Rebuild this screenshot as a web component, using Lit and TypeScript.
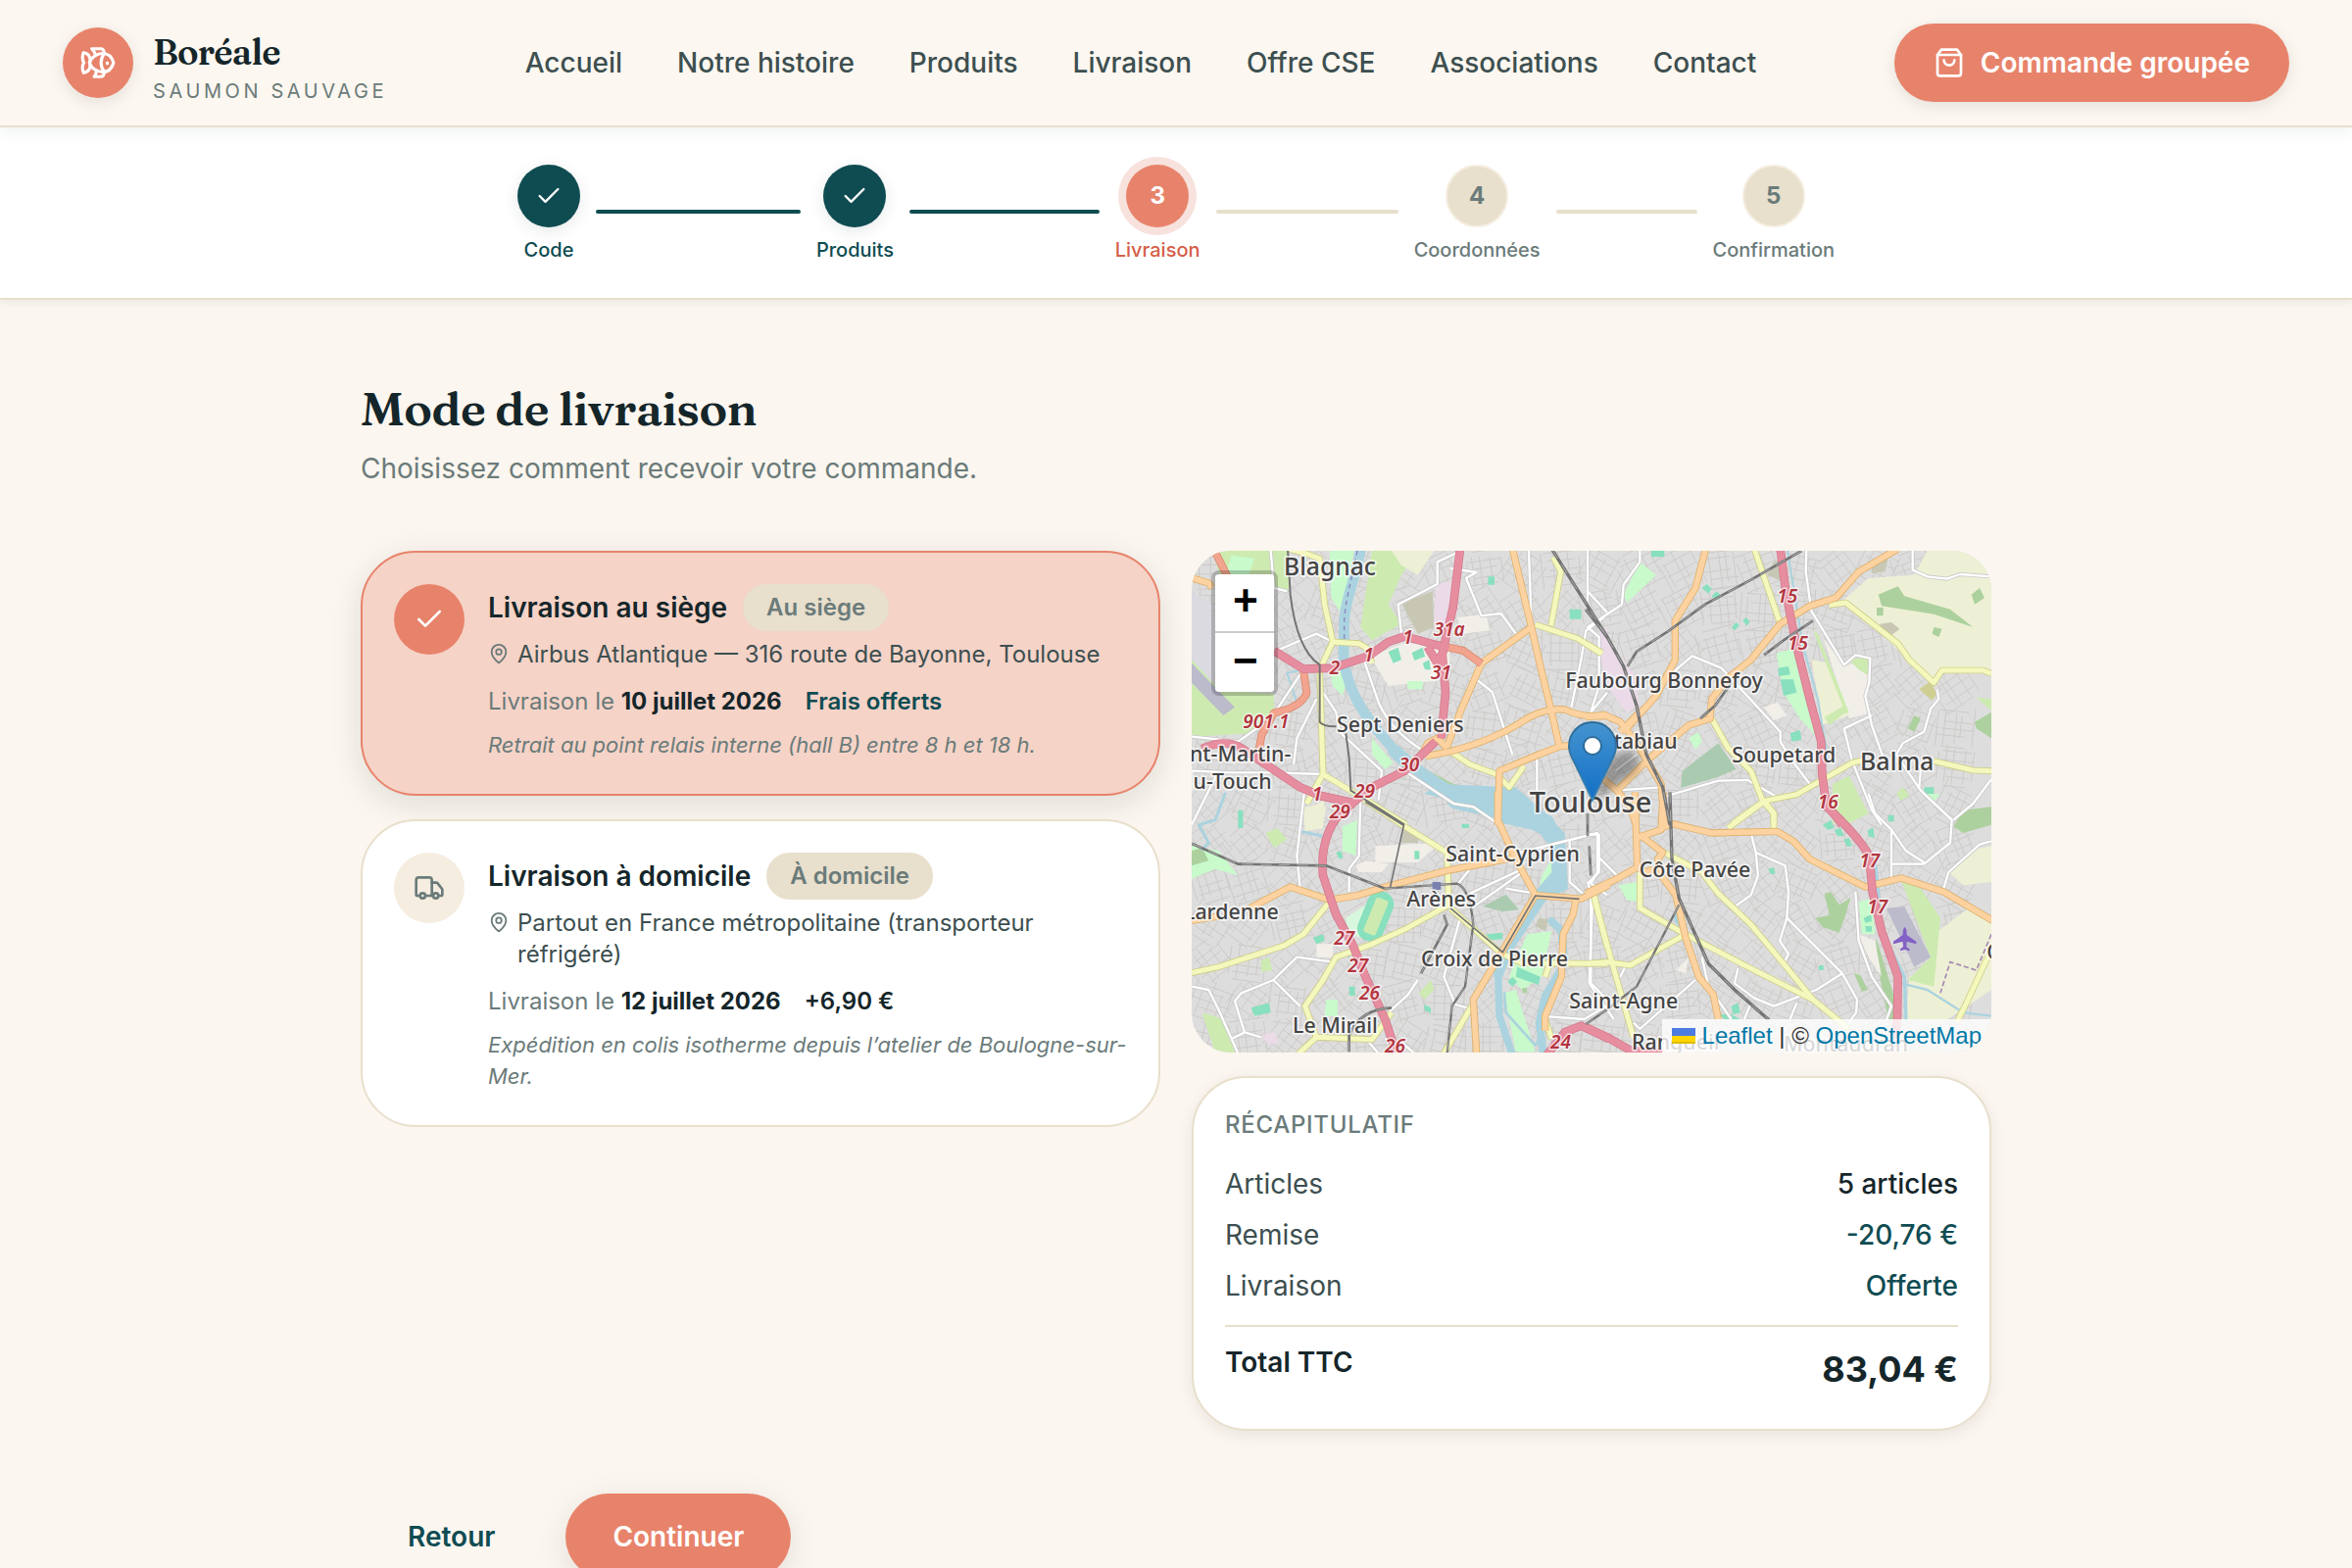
import { LitElement, html, svg, css } from "lit";
import { customElement, property, state } from "lit/decorators.js";
import { classMap } from "lit/directives/class-map.js";

/* ---------- icons ---------- */

const ICONS = {
  fish: svg`<path d="M6.5 12c.94-3.46 4.94-6 8.5-6 3.56 0 6.06 2.54 7 6-.94 3.47-3.44 6-7 6s-7.56-2.53-8.5-6Z"/><path d="M18 12v.5"/><path d="M16 17.93a9.77 9.77 0 0 1 0-11.86"/><path d="M7 10.67C7 8 5.58 5.97 2.73 5.5c-1 1.5-1 5 .23 6.5-1.24 1.5-1.24 5-.23 6.5C5.58 18.03 7 16 7 13.33"/><path d="M10.46 7.26C10.2 5.88 9.17 4.24 8 3h5.8a2 2 0 0 1 1.98 1.67l.23 1.4"/><path d="m16.01 17.93-.23 1.4A2 2 0 0 1 13.8 21H9.5a5.96 5.96 0 0 0 1.49-3.98"/>`,
  bag: svg`<path d="M6 2 3 6v14a2 2 0 0 0 2 2h14a2 2 0 0 0 2-2V6l-3-4Z"/><path d="M3 6h18"/><path d="M16 10a4 4 0 0 1-8 0"/>`,
  check: svg`<path d="M20 6 9 17l-5-5"/>`,
  truck: svg`<path d="M14 18V6a2 2 0 0 0-2-2H4a2 2 0 0 0-2 2v11a1 1 0 0 0 1 1h2"/><path d="M15 18H9"/><path d="M19 18h2a1 1 0 0 0 1-1v-3.65a1 1 0 0 0-.22-.624l-3.48-4.35A1 1 0 0 0 17.52 8H14"/><circle cx="17" cy="18" r="2"/><circle cx="7" cy="18" r="2"/>`,
  pin: svg`<path d="M20 10c0 4.993-5.539 10.193-7.399 11.799a1 1 0 0 1-1.202 0C9.539 20.193 4 14.993 4 10a8 8 0 0 1 16 0"/><circle cx="12" cy="10" r="3"/>`,
};

const icon = (name: keyof typeof ICONS, size: number) => html`<svg
  width=${size} height=${size} viewBox="0 0 24 24" fill="none" stroke="currentColor"
  stroke-width="2" stroke-linecap="round" stroke-linejoin="round" aria-hidden="true"
>${ICONS[name]}</svg>`;

/* ---------- map data: four sheets, each in its own coordinates ---------- */

type Sheet = "nw" | "ne" | "sw" | "se";
const ORIGIN: Record<Sheet, string> = {
  nw: "translate(-48 -66)",
  ne: "translate(1212 -66)",
  sw: "translate(-48 744)",
  se: "translate(1212 744)",
};

const LAND: [Sheet, string, string][] = [
  ["nw", "#cdebb0", "M600 66H740L690 140 650 230 690 290 600 340 565 300Z"],
  ["nw", "#eef0d5", "M660 66H790L740 140 690 110Z"],
  ["nw", "#c8facc", "M470 66H545L520 200 500 250 475 210Z"],
  ["nw", "#cdebb0", "M110 66H345V185H150Z"],
  ["nw", "#c8facc", "M170 80 240 90 220 150 150 150Z"],
  ["nw", "#dadae0", "M48 190 110 230 140 400 110 480 48 430Z"],
  ["nw", "#cdebb0", "M48 400 130 490 300 505V560L230 625 48 635Z"],
  ["nw", "#bbbbcc", "M48 410 180 545 145 570 48 470Z"],
  ["nw", "#c7c7b4", "M690 225 785 190 790 300 740 320Z"],
  ["nw", "#ebdbe8", "M795 170 855 155 845 290 790 300Z"],
  ["nw", "#f2efe9", "M595 390 690 350 840 350 835 460 650 480Z"],
  ["nw", "#f2efe9", "M860 270 950 260 960 310 880 320Z"],
  ["nw", "#88e0be", "M650 375 680 362 690 400 665 410Z M722 378 755 362 762 390 730 402Z M755 410 775 400 780 430 762 430Z M1205 245H1240V275H1205Z"],
  ["nw", "#c8facc", "M708 465H755V490H708Z M470 430 530 440 510 510 480 480Z M600 640 665 715 640 735 600 690Z"],
  ["nw", "#add19e", "M765 735 850 780 980 810 975 830 850 800Z"],
  ["nw", "#c8facc", "M850 795 980 800 975 825 900 820Z"],
  ["nw", "#eef0d5", "M390 850 460 850 450 900H395Z"],
  ["nw", "#ebdbe8", "M1300 330 1320 300V430L1300 400Z"],
  ["nw", "#88e0be", "M955 145H975V170H955Z M1060 830H1085V850H1060Z M190 860H205V885H190Z"],
  ["ne", "#eef0d5", "M1040 66H1236V430H1080L1060 470 980 400 850 270 780 220 860 150 1000 140Z"],
  ["ne", "#add19e", "M890 200 950 175 970 205 1110 245 1180 300 1060 260 900 235Z M885 240H905V265H885Z M1060 300 1085 305 1075 330 1055 320Z M1175 200 1200 180 1215 210 1185 230Z"],
  ["ne", "#c7c7b4", "M895 290 930 285 955 305 930 325 900 310Z M870 100 920 90 910 130 870 135Z"],
  ["ne", "#d0cf93", "M1015 490 1050 465 1068 505 1055 525Z"],
  ["ne", "#f2efe9", "M690 290 785 420 865 395 855 565 800 580 720 330Z"],
  ["ne", "#eef0d5", "M685 400 740 410 800 570 720 600Z"],
  ["ne", "#cdebb0", "M800 400 860 390 862 450 830 430Z M725 575 785 540 790 560 740 600Z M750 780 800 755 860 870 800 900 750 900Z M690 310 705 320 800 560 790 565Z"],
  ["ne", "#c8facc", "M578 380 650 360 690 530 705 640 650 580 600 500Z M310 640 340 620 350 650 330 675Z M110 200 160 100 210 140 120 225Z"],
  ["ne", "#88e0be", "M583 425 615 420 620 445 585 450Z M590 460 630 460 640 500 600 510Z M620 625 650 615 655 645 625 650Z M350 180 365 168 380 182 370 197Z M380 205 395 190 410 205 395 218Z M440 300 455 285 465 295 450 310Z M475 280 485 270 497 285 487 295Z M195 66H235V85H195Z M1030 790H1060V815H1030Z"],
  ["ne", "#ebdbe8", "M35 300 140 440 160 540 120 560 50 470Z"],
  ["ne", "#aacbaf", "M290 740 400 655 455 735 400 758 285 792Z"],
  ["ne", "#add19e", "M1185 590 1236 560V640L1190 610Z M980 610 1000 570 1020 580 1000 620Z"],
  ["ne", "#cdebb0", "M945 810 965 790 985 815 960 830Z M1190 515 1236 520V555Z"],
  ["ne", "#f2efe9", "M540 545 580 530 610 570 570 585Z"],
  ["ne", "#c7c7b4", "M570 100 600 90 595 160 550 140Z"],
  ["sw", "#f2efe9", "M610 160 810 150 740 210 610 210Z M550 220 580 205 650 215 630 240 560 240Z M430 460H480V500H430Z"],
  ["sw", "#c7c7b4", "M700 95 745 120 740 150 690 150Z M1110 380 1140 385 1130 420 1100 405Z"],
  ["sw", "#c8facc", "M510 100 555 80 550 190 510 175Z M1075 430 1150 420 1120 560 1060 600 1020 560Z M1120 250 1150 200 1150 290 1110 300Z M1005 610 1040 600 1100 790 1040 790Z"],
  ["sw", "#eef0d5", "M390 50 455 20 450 105 395 115Z"],
  ["sw", "#cdebb0", "M275 120 310 105 340 140 300 165Z M260 510 285 500 295 540 262 545Z M80 670 145 690 180 792H120Z M745 610 780 570 790 600 760 630Z"],
  ["sw", "#d8f8dd", "M520 380 610 320 560 440 525 420Z"],
  ["sw", "#c8facc", "M460 630H495V680H455Z M48 160 130 175 190 250 120 230 48 260Z M1085 70 1130 90 1120 110 1070 90Z"],
  ["sw", "#add19e", "M48 175 80 165 100 205 48 220Z M1060 595H1075V610H1060Z"],
  ["sw", "#aacbaf", "M940 345 1010 308 1050 355 1000 360Z"],
  ["sw", "#ebdbe8", "M260 740 300 728 315 760 285 770Z"],
  ["sw", "#88e0be", "M230 655 285 640 290 670 240 680Z M420 440 450 430 455 450 430 460Z M530 590H548V618H530Z M490 180 505 175 512 195 500 200Z M760 645 780 655 780 672 760 662Z M730 175H745V200H730Z M1045 530 1115 560 1110 585 1040 560Z M1015 575 1030 560 1045 575 1030 590Z M190 75H205V105H190Z M875 92H897V105H875Z M950 430 1000 425 1000 445 960 448Z"],
  ["se", "#add19e", "M697 380 740 372 725 305 745 300 770 340 805 318 790 370 770 425 720 408Z M883 440 960 690H920L885 510Z M1120 100 1150 50 1236 40V95L1150 120Z M815 550 835 555 858 600 840 605Z"],
  ["se", "#eef0d5", "M1060 430 1180 340 1236 390V600L1100 692H975L985 560 1060 540Z M1105 240 1180 170 1236 160V270L1150 280Z"],
  ["se", "#cdebb0", "M960 265 1020 290 1080 380 1060 590 980 570 1050 500Z"],
  ["se", "#c8facc", "M95 280 150 270 150 330 120 325Z M830 330 870 320 880 430 840 430Z M1040 0H1080L1060 25Z"],
  ["se", "#bbbbcc", "M915 350 970 345 1050 500 1000 530Z"],
  ["se", "#f2efe9", "M270 540 310 500 300 550Z M830 430 880 450 900 560 860 500Z"],
  ["se", "#88e0be", "M720 95 745 80 755 105 735 110Z M755 110 775 105 785 130 765 130Z M785 140 800 135 810 160 795 162Z M857 110 875 105 878 135 860 130Z M553 230 570 225 575 245 560 245Z M845 380 868 370 870 390 850 395Z M850 405H870V422H852Z M440 650 460 640 468 670 445 675Z M405 675H440L470 692H420Z M920 65H938V85H920Z M708 525H722V540H708Z"],
];

const WATER: [Sheet, string, number][] = [
  ["nw", "M565 60C558 130 520 200 515 280L513 400C530 520 600 600 680 690", 32],
  ["nw", "M670 680C740 745 800 790 880 825", 42],
  ["nw", "M860 825C950 850 1040 850 1130 905", 64],
  ["nw", "M280 620 260 600 370 530 340 440 390 430", 6],
  ["sw", "M1150 390 1180 420 1190 520 1130 620 1112 700 1125 800", 24],
  ["sw", "M985 520 990 680 1030 800", 22],
  ["sw", "M1005 610 1010 670 1100 770 1130 720", 8],
  ["sw", "M150 0 120 80 70 95 100 150 80 170", 9],
  ["sw", "M380 115 450 130", 9],
  ["ne", "M612 66 660 360 705 520 735 700", 6],
  ["se", "M880 200 900 420 970 560 975 692", 10],
  ["se", "M960 580 1040 600 1150 670 1236 680", 7],
  ["se", "M268 375 285 400", 18],
];

type RoadKind = "minor" | "yellow" | "orange" | "trunk" | "motorway";
const ROADS: Record<RoadKind, [Sheet, string][]> = {
  minor: [
    ["nw", "M860 72 800 100V168L680 230 690 320 575 400 620 530Q660 620 760 680"],
    ["nw", "M840 120 920 132 888 150 935 265 995 258 1040 320"],
    ["nw", "M300 375 430 320 480 345M290 66 300 180 340 190"],
    ["nw", "M920 460 968 498 1030 690M390 430 290 580 190 650 48 635"],
    ["nw", "M430 520 370 640 360 720M48 740 170 745 290 745 450 750"],
    ["nw", "M450 500 490 560 500 620 630 740 620 830"],
    ["nw", "M700 740 850 840 910 850 990 905M1260 66V190L1320 255"],
    ["nw", "M1310 270 1255 310 1240 400 1210 545M1080 66 1088 290M130 740 48 905"],
    ["nw", "M1105 700V800M1270 560 1320 500"],
    ["sw", "M392 0 370 190 380 290M565 0 560 190 530 230V300"],
    ["sw", "M905 350 1060 240M900 305 1050 235M860 280 900 230M1050 180 1290 120V240L1270 275 1320 310"],
    ["sw", "M1205 140V270L1245 305M1010 290 1100 305M380 650 298 570 370 500 480 515"],
    ["sw", "M298 570 200 610 180 635 210 730 170 750M210 730 260 745M48 590 100 600 130 660 190 795"],
    ["sw", "M740 570 710 615 650 670M870 380 820 560 855 645 890 655"],
    ["sw", "M1270 320V580L1320 630M1140 682 1250 690 1300 660M640 750 690 760 730 795M590 760 620 795"],
    ["ne", "M160 66V100L110 170 105 230 0 300 35 330V480L10 560"],
    ["ne", "M265 435 320 388 410 425 590 620V650L620 700 680 780"],
    ["ne", "M670 66 668 130 685 250 785 415 820 385 865 395 862 470 850 510 870 600 905 700"],
    ["ne", "M995 66V125L1040 145 1100 152 1140 138 1236 145"],
    ["ne", "M1070 490 1075 520 1050 550 1030 620 965 655 945 690 1020 800 1115 890"],
    ["ne", "M870 570 785 610 810 710 870 860 900 905M230 820 400 770 490 768 580 820"],
    ["ne", "M1022 710 1015 790M1236 765 1180 840 1120 890M80 800 225 790M85 740 150 690M0 185V220"],
    ["se", "M500 120 515 180 605 220 615 300 610 380 690 460 780 550 825 630 822 670 800 700"],
    ["se", "M515 180 522 250 500 310 455 342M610 380 588 450 615 490 600 520"],
    ["se", "M780 550 700 600 570 650 510 625 450 580 460 535M640 640 620 690"],
    ["se", "M860 0 880 60 930 110V260M1030 0 1115 80 1110 150 1030 215 930 215M930 110 975 175 1030 210"],
    ["se", "M820 300 830 450 870 560 930 650 915 692M1236 145 1200 155 1105 240 1090 290"],
    ["se", "M350 500 370 590 440 690M0 270 15 320 5 580 80 690M330 570 160 720 140 700"],
    ["se", "M0 125H35V240L0 275M35 195 90 250M100 560 120 520M480 690 500 640"],
  ],
  yellow: [
    ["nw", "M345 60 400 75 440 90 455 230 480 345 440 430 450 750 400 840"],
    ["nw", "M480 345 560 350 585 365 600 410M450 750 600 840 705 905"],
    ["nw", "M840 680 900 720 980 750 1020 790 1065 725"],
    ["nw", "M1100 292 1230 335 1300 380M1148 295 1178 130 1155 85"],
    ["sw", "M580 20 700 100 830 180 835 340 700 415 600 460 490 500 450 570 395 650 430 745"],
    ["sw", "M375 795 430 745 600 752 660 670M470 330 390 430 330 465 130 530 48 548"],
    ["sw", "M840 350 995 488 1060 518 1320 520M905 650 820 795M1280 310 1320 470M1130 560 1150 500"],
    ["sw", "M400 0 430 -20M1130 690 1150 750"],
    ["ne", "M510 60 590 290M740 232 790 225 950 350 985 400 1060 470 1085 432 1210 432 1236 442"],
    ["ne", "M380 580 430 670 500 740 535 830 570 870V905M445 900 540 832 640 812 810 715 840 708"],
    ["ne", "M1060 710 1180 738 1236 740M0 352 45 380"],
    ["se", "M540 20 570 60V110M545 20 430 105M235 180 350 240 400 305 500 400 600 520 690 630 800 720"],
    ["se", "M160 240 160 350 290 425 500 535 690 630M300 430 130 525 60 515 0 520"],
    ["se", "M20 320 70 500 140 745M1225 500 1160 640 1130 700"],
  ],
  orange: [
    ["nw", "M1030 60 1088 300 1120 440 1145 540 1175 670"],
    ["nw", "M1088 300 935 410 870 560 830 665"],
    ["nw", "M765 695 840 680Q960 650 1050 595 1120 545 1190 552 1250 580 1320 570"],
    ["nw", "M1230 660 1175 665 1110 690 990 740 985 905M750 695 770 655 800 640 830 670"],
    ["nw", "M50 150 100 165 110 180"],
    ["sw", "M985 -5V80L1040 200 1100 310 1240 322 1325 280"],
    ["sw", "M225 350 350 285 470 325 560 310 640 285 830 235 1040 195M48 388 130 375"],
    ["sw", "M1100 310 1000 480 910 630 920 795M1225 320 1215 370 1185 430 1180 560 1130 680V725"],
    ["ne", "M362 60 330 180 268 280 268 400 210 510 110 620"],
    ["ne", "M950 60 830 130 760 210 680 235 590 290 540 350 500 400 430 455 380 520 375 580 310 600 180 710 90 800 50 765"],
    ["ne", "M-5 575 50 568 100 590 140 640 225 780 235 905M90 800 130 850 148 905M100 620 160 560"],
    ["se", "M145 -5 152 225 90 260 -5 305M232 -5 225 110 150 135"],
    ["se", "M225 105 260 92 380 120 580 115 630 145 680 200 850 285 960 258 1090 300 1240 388"],
    ["se", "M160 125 230 180 215 200 225 250 270 310 300 440 340 560 385 615 400 690"],
    ["se", "M152 225 180 240 200 230"],
  ],
  trunk: [
    ["nw", "M120 70 160 150M835 362 880 372 935 412"],
    ["nw", "M390 430 400 500Q385 545 300 562L262 630 250 700"],
  ],
  motorway: [
    ["nw", "M300 372 390 428 480 425 590 388 650 345 700 328 800 355 835 362"],
    ["nw", "M870 60 848 240 815 380 825 500 812 640M770 360 800 410 820 370"],
    ["nw", "M80 672Q150 640 200 670L290 730 380 790 440 815 540 838 600 790 700 740 795 650"],
    ["sw", "M440 5 550 30M560 10 490 75Q440 150 450 250L490 370 540 460 580 560 640 690 675 795"],
    ["ne", "M590 60 608 200 640 360 680 520 715 650 718 750 730 840 780 905"],
    ["se", "M722 30Q830 130 862 190L872 300 900 420 950 560 948 690 935 795"],
    ["sw", "M1135 800 1190 730 1240 710 1325 750"],
    ["se", "M-5 715 60 745 130 785 230 795"],
  ],
};

const ROAD_STYLE: Record<RoadKind, [string, string, number]> = {
  minor: ["#c9c9c9", "#ffffff", 9],
  yellow: ["#cdce8a", "#f5f8bd", 17],
  orange: ["#dfb06c", "#fcd3a0", 19],
  trunk: ["#d98a72", "#f3a48e", 21],
  motorway: ["#d67a8e", "#e68ea0", 23],
};

const RAILS: [Sheet, string, number][] = [
  ["nw", "M1150 60 1200 140 1320 330", 10],
  ["ne", "M-5 245 60 330 110 420 150 540 180 690 230 790 252 905", 10],
  ["ne", "M655 66 500 155 360 230 250 310 150 375 122 420", 8],
  ["ne", "M690 280 600 340 540 385M440 470 390 540 345 580", 8],
  ["se", "M252 -5 258 200 280 320 370 520 450 600 555 692", 10],
  ["se", "M280 340 150 590 60 660 -5 705", 7],
  ["sw", "M48 152 190 215 460 220 640 290", 8],
  ["sw", "M640 290 860 275Q900 290 910 400L885 590 845 650 830 795", 7],
  ["sw", "M580 25 697 97 655 290M840 350 1000 485 1100 312 1235 322", 5],
  ["sw", "M530 790V740Q560 660 660 655M820 370 830 400 750 550M1260 60V130M1265 160 1270 250", 8],
  ["nw", "M342 60 350 200Q370 370 440 415V590Q450 605 490 604", 6],
  ["nw", "M520 625 530 700 535 800 700 905", 6],
];

const PLACES: [Sheet, string, number, number, number, string?][] = [
  ["nw", "Blagnac", 330, 140, 74],
  ["nw", "Sept Deniers", 492, 622, 64],
  ["nw", "Faubourg Bonnefoy", 1192, 486, 64],
  ["ne", "Matabiau", 275, 672, 64, "end"],
  ["nw", "Toulouse", 1082, 866, 87],
  ["ne", "Soupetard", 442, 714, 64],
  ["ne", "Balma", 834, 738, 75],
  ["nw", "Saint-Martin-", 352, 712, 64, "end"],
  ["nw", "du-Touch", 293, 796, 64, "end"],
  ["sw", "Saint-Cyprien", 826, 208, 64],
  ["sw", "Arènes", 706, 346, 64],
  ["sw", "Lardenne", 314, 384, 64, "end"],
  ["sw", "Croix de Pierre", 750, 528, 64],
  ["sw", "Le Mirail", 357, 732, 64],
  ["sw", "Saint-Agne", 1204, 656, 64],
  ["se", "Côte Pavée", 158, 256, 64],
  ["se", "Rangueil", 135, 784, 64],
  ["se", "Montaudran", 600, 790, 64],
  ["se", "Quint", 1222, 507, 64],
];

const REFS: [Sheet, string, number, number][] = [
  ["nw", "31a", 788, 328], ["nw", "1", 694, 352], ["nw", "1", 574, 406], ["nw", "2", 470, 444],
  ["nw", "31", 780, 460], ["nw", "901.1", 205, 610], ["nw", "30", 682, 742], ["nw", "29", 546, 822],
  ["nw", "29", 470, 886], ["nw", "1", 416, 830], ["sw", "27", 484, 462], ["sw", "27", 526, 545],
  ["sw", "26", 561, 630], ["sw", "26", 639, 792], ["ne", "15", 580, 226], ["ne", "15", 612, 368],
  ["ne", "16", 704, 856], ["se", "17", 832, 226], ["se", "17", 856, 365], ["sw", "24", 1146, 780],
];

/** Fine residential street mesh: small patches of jittered parallel lines. */
function streetMesh(): string {
  let seed = 7;
  const rnd = () => ((seed = (seed * 16807) % 2147483647) / 2147483647);
  let d = "";
  for (let cy = 60; cy < 1536; cy += 120) {
    for (let cx = 60; cx < 2448; cx += 120) {
      const a = rnd() * 1.5;
      for (const ang of [a, a + 1.57]) {
        const ux = Math.cos(ang), uy = Math.sin(ang);
        for (let k = -2; k <= 2; k++) {
          const off = k * 27 + rnd() * 14;
          const l1 = 30 + rnd() * 35, l2 = 30 + rnd() * 35;
          const x = cx - uy * off, y = cy + ux * off;
          d += `M${Math.round(x - ux * l1)} ${Math.round(y - uy * l1)}L${Math.round(x + ux * l2)} ${Math.round(y + uy * l2)}`;
        }
      }
    }
  }
  return d;
}
const MESH = streetMesh();

@customElement("city-map")
export class CityMap extends LitElement {
  static styles = css`
    :host { display: block; }
    .map {
      position: relative;
      overflow: hidden;
      aspect-ratio: 51 / 32;
      border-radius: 40px;
      background: #dddddd;
      font-family: "Liberation Sans", Arial, sans-serif;
    }
    .tiles { display: block; width: 100%; height: 100%; }
    .place { font-family: "Noto Sans", sans-serif; font-weight: 500; fill: #444; stroke: rgba(255, 255, 255, 0.7); stroke-width: 11px; paint-order: stroke; stroke-linejoin: round; }
    .ref { font: italic 600 57px "Noto Sans", sans-serif; fill: #b2353f; stroke: rgba(255, 255, 255, 0.7); stroke-width: 9px; paint-order: stroke; stroke-linejoin: round; }
    .marker { position: absolute; left: 50%; top: 50%; width: 132px; height: 84px; margin: -82px 0 0 -24px; }
    .zoom {
      position: absolute;
      left: 20px;
      top: 20px;
      display: flex;
      flex-direction: column;
      border: 4px solid rgba(0, 0, 0, 0.2);
      border-radius: 8px;
      background-clip: padding-box;
    }
    .zoom button {
      box-sizing: border-box;
      width: 60px;
      height: 60px;
      border: 0;
      padding: 2px 0 0 2px;
      background: #fff;
      color: #000;
      font: bold 44px/56px "Liberation Mono", monospace;
    }
    .zoom button:first-child { border-bottom: 2px solid #ccc; border-radius: 4px 4px 0 0; }
    .zoom button:last-child { border-radius: 0 0 4px 4px; }
    .credit {
      position: absolute;
      right: 0;
      bottom: 0;
      padding: 0 10px;
      background: rgba(255, 255, 255, 0.8);
      color: #333;
      font-size: 24px;
      line-height: 34px;
    }
    .credit a { color: #0078a8; text-decoration: none; }
    .flag { display: inline; }
  `;

  private roads(kind: RoadKind) {
    const [casing, fill, width] = ROAD_STYLE[kind];
    const layer = (color: string, w: number) => svg`<g fill="none" stroke=${color} stroke-width=${w} stroke-linejoin="round">
      ${ROADS[kind].map(([s, d]) => svg`<path transform=${ORIGIN[s]} d=${d}/>`)}</g>`;
    return svg`${layer(casing, width + 3)}${layer(fill, width - 2)}`;
  }

  render() {
    return html`
      <div class="map" role="region" aria-label="Carte de Toulouse">
        <svg class="tiles" viewBox="0 0 2448 1536" preserveAspectRatio="xMidYMid slice" aria-hidden="true">
          <path d=${MESH} fill="none" stroke="#cdcbc8" stroke-width="3"/>
          ${LAND.map(([s, c, d]) => svg`<path transform=${ORIGIN[s]} fill=${c} d=${d}/>`)}
          <g transform=${ORIGIN.sw}>
            <rect x="570" y="295" width="82" height="160" rx="40" transform="rotate(22 611 375)" fill="#88e0be"/>
            <rect x="592" y="318" width="40" height="114" rx="8" transform="rotate(22 611 375)" fill="#cdebb0"/>
          </g>
          <g fill="none" stroke="#aad3df" stroke-linejoin="round" stroke-linecap="round">
            ${WATER.map(([s, d, w]) => svg`<path transform=${ORIGIN[s]} stroke-width=${w} d=${d}/>`)}
          </g>
          <path transform=${ORIGIN.sw} fill="#aad3df" d="M760 0 800 -30 1040 -20 1120 50 1190 120 1200 290 1130 330 1030 480 1000 560 970 560 990 480 1090 310 1150 240V170L1110 115 1000 90 930 50 850 20Z"/>
          <path transform=${ORIGIN.nw} fill="none" stroke="#8a86c0" stroke-width="4" stroke-dasharray="14 12" d="M555 66C545 130 520 200 515 280V340"/>
          ${this.roads("minor")}${this.roads("yellow")}${this.roads("orange")}${this.roads("trunk")}${this.roads("motorway")}
          <g fill="none" stroke="#747474">
            ${RAILS.map(([s, d, w]) => svg`<path transform=${ORIGIN[s]} stroke-width=${w} d=${d}/>`)}
          </g>
          <g fill="none" stroke="#c4c4c4" stroke-dasharray="34 22">
            ${RAILS.filter((r) => r[2] > 6).map(([s, d]) => svg`<path transform=${ORIGIN[s]} stroke-width="2" d=${d}/>`)}
          </g>
          <path transform=${ORIGIN.se} fill="none" stroke="#a58ab0" stroke-width="5" stroke-dasharray="16 8" d="M1236 430 1190 540 1110 515 1080 610"/>
          <rect transform=${ORIGIN.sw} x="785" y="270" width="26" height="24" fill="#7981b0"/>
          <path transform=${ORIGIN.se} fill="#8461c4" d="M971 408Q978 414 977 432L1006 452V460L977 452 976 468 986 476V481L971 477 957 481V476L966 468 965 452 936 460V452L965 432Q964 414 971 408Z"/>
          ${PLACES.map(([s, t, x, y, size, anchor]) => svg`<text class="place" transform=${ORIGIN[s]} x=${x} y=${y} font-size=${size} text-anchor=${anchor ?? "start"}>${t}</text>`)}
          ${REFS.map(([s, t, x, y]) => svg`<text class="ref" transform=${ORIGIN[s]} x=${x} y=${y}>${t}</text>`)}
        </svg>
        <svg class="marker" viewBox="0 0 132 84" aria-hidden="true">
          <defs>
            <linearGradient id="pin" x1="0" y1="0" x2="0" y2="1"><stop offset="0" stop-color="#4594cf"/><stop offset="1" stop-color="#126fc6"/></linearGradient>
            <linearGradient id="rim" x1="0" y1="0" x2="0" y2="1"><stop offset="0" stop-color="#2e6c97"/><stop offset="1" stop-color="#3883b7"/></linearGradient>
            <filter id="soft" x="-30%" y="-30%" width="160%" height="160%"><feGaussianBlur stdDeviation="4"/></filter>
          </defs>
          <path d="M26 82 38 44Q52 26 68 32 78 40 66 54Z" fill="#000" opacity=".32" filter="url(#soft)"/>
          <path d="M25 1C11 1 1 12 1 25.500c0 6 2.500 11 5.500 16.500L25 80.500 43.500 42C46.500 36.500 49 31.500 49 25.500 49 12 39 1 25 1Z" fill="url(#pin)" stroke="url(#rim)" stroke-width="2"/>
          <circle cx="25" cy="25" r="9" fill="#fff" stroke="#2e6c97" stroke-width="2"/>
        </svg>
        <div class="zoom">
          <button type="button" aria-label="Zoom avant">+</button>
          <button type="button" aria-label="Zoom arrière">−</button>
        </div>
        <div class="credit">
          <a href="#leaflet"><svg class="flag" width="24" height="16" viewBox="0 0 12 8" aria-hidden="true"><path fill="#4C7BE1" d="M0 0h12v4H0z"/><path fill="#FFD500" d="M0 4h12v3H0z"/><path fill="#E0BC00" d="M0 7h12v1H0z"/></svg> Leaflet</a> | © <a href="#osm">OpenStreetMap</a>
        </div>
      </div>
    `;
  }
}

/* ---------- order steps ---------- */

@customElement("order-steps")
export class OrderSteps extends LitElement {
  @property({ type: Array }) steps: string[] = [];
  @property({ type: Number }) current = 0;

  static styles = css`
    :host { display: block; background: #fff; border-bottom: 2px solid #e8dfcc; box-shadow: 0 2px 8px rgba(15, 76, 82, 0.08); padding: 38px 64px 40px; }
    .steps { display: flex; max-width: 1344px; margin: 0 auto; padding: 0; list-style: none; }
    .item { display: flex; align-items: center; flex: 1; }
    .item:last-child { flex: none; }
    .step { display: flex; flex-direction: column; align-items: center; gap: 14px; }
    .dot {
      display: flex; align-items: center; justify-content: center;
      box-sizing: border-box; width: 64px; height: 64px; border-radius: 50%;
      border: 2px solid #f5ede0; background: #e8dfcc; color: #6b7b7a;
      font-size: 24px; font-weight: 700;
    }
    .label { font-size: 20px; line-height: 18px; font-weight: 500; color: #6b7b7a; }
    .line { flex: 1; height: 4px; margin: 0 16px; border-radius: 2px; background: #e8dfcc; }
    .done .dot { border: 0; background: #0f4c52; color: #fff; box-shadow: 0 4px 16px rgba(15, 38, 42, 0.1); }
    .done .label { color: #0f4c52; }
    .done .line { background: #0f4c52; }
    .active .dot { border: 0; background: #e8836b; color: #fff; box-shadow: 0 0 0 8px #f7e2dd; }
    .active .label { color: #d5604a; }
  `;

  render() {
    return html`<ol class="steps">
      ${this.steps.map((name, i) => html`
        <li class=${classMap({ item: true, done: i < this.current, active: i === this.current })}>
          <div class="step">
            <span class="dot">${i < this.current ? icon("check", 28) : i + 1}</span>
            <span class="label">${name}</span>
          </div>
          ${i < this.steps.length - 1 ? html`<span class="line"></span>` : null}
        </li>`)}
    </ol>`;
  }
}

/* ---------- page ---------- */

const NAV = ["Accueil", "Notre histoire", "Produits", "Livraison", "Offre CSE", "Associations", "Contact"];

const OPTIONS = [
  {
    id: "siege", title: "Livraison au siège", tag: "Au siège",
    place: "Airbus Atlantique — 316 route de Bayonne, Toulouse",
    date: "10 juillet 2026", fee: "Frais offerts", free: true,
    note: "Retrait au point relais interne (hall B) entre 8 h et 18 h.",
  },
  {
    id: "domicile", title: "Livraison à domicile", tag: "À domicile",
    place: "Partout en France métropolitaine (transporteur réfrigéré)",
    date: "12 juillet 2026", fee: "+6,90 €", free: false,
    note: "Expédition en colis isotherme depuis l’atelier de Boulogne-sur-Mer.",
  },
];

@customElement("app-root")
export class AppRoot extends LitElement {
  @state() private selected = "siege";

  static styles = css`
    :host { display: block; min-height: 100vh; background: #fbf6ef; color: #15262a; font-family: Inter, sans-serif; font-size: 28px; line-height: 40px; }
    a { color: inherit; text-decoration: none; }
    button { font: inherit; cursor: pointer; border: 0; }
    .header {
      position: relative; z-index: 1;
      display: flex; align-items: center; justify-content: space-between;
      box-sizing: border-box; height: 130px; padding: 0 64px;
      background: #fcf7f0; border-bottom: 2px solid #e8dfcc;
      box-shadow: 0 4px 16px rgba(15, 76, 82, 0.08);
    }
    .brand { display: flex; align-items: center; gap: 20px; }
    .logo { display: flex; align-items: center; justify-content: center; width: 72px; height: 72px; border-radius: 50%; background: #e8836b; color: #fff; box-shadow: 0 4px 16px rgba(15, 38, 42, 0.1); }
    .names { display: flex; flex-direction: column; padding-top: 6px; }
    .name { font: 600 36px/52px Fraunces, "Liberation Serif", serif; letter-spacing: -0.02em; }
    .tagline { font-size: 20px; line-height: 28px; letter-spacing: 0.18em; color: #6b7b7a; }
    .nav { display: flex; gap: 56px; font-weight: 500; color: #3d4f50; }
    .cta { display: flex; align-items: center; gap: 16px; padding: 20px 40px; border-radius: 40px; background: #e8836b; color: #fff; font-weight: 600; box-shadow: 0 4px 16px rgba(15, 38, 42, 0.1); }
    .main { max-width: 1664px; margin: 0 auto; padding: 80px 64px; }
    .heading { margin: 0; font: 600 48px/62px Fraunces, "Liberation Serif", serif; letter-spacing: -0.01em; }
    .intro { margin: 8px 0 62px; line-height: 44px; color: #6b7b7a; }
    .columns { display: grid; grid-template-columns: 1fr 1fr; gap: 32px; align-items: start; }
    .stack { display: flex; flex-direction: column; gap: 24px; margin: 0; padding: 0; border: 0; min-width: 0; }
    .option {
      position: relative; display: flex; gap: 24px; padding: 32px; cursor: pointer;
      border: 2px solid #e8dfcc; border-radius: 56px; background: #fff;
      font-size: 24px; line-height: 32px;
    }
    .option.on { border-color: #e8836b; background: #f5d3c7; box-shadow: 0 8px 32px rgba(15, 38, 42, 0.12); }
    .radio { position: absolute; opacity: 0; margin: 0; }
    .badge { display: flex; flex: none; align-items: center; justify-content: center; width: 72px; height: 72px; border-radius: 50%; background: #f5ede0; color: #6b7b7a; }
    .on .badge { background: #e8836b; color: #fff; }
    .body { flex: 1; min-width: 0; padding-bottom: 2px; }
    .top { display: flex; align-items: center; gap: 16px; margin-bottom: 8px; }
    .title { font-size: 28px; font-weight: 600; }
    .tag { padding: 8px 24px; border-radius: 24px; background: #e8dfcc; color: #6b7b7a; font-weight: 600; }
    .place { display: flex; gap: 8px; color: #3d4f50; margin-bottom: 16px; }
    .pin { flex: none; height: 22px; padding-top: 4px; color: #6b7b7a; line-height: 0; }
    .when { display: flex; gap: 24px; margin-bottom: 12px; color: #6b7b7a; }
    .when strong { color: #15262a; font-weight: 700; }
    .when .free { color: #0f4c52; }
    .when .fee { font-weight: 600; }
    .note { font-size: 22px; font-style: italic; color: #6b7b7a; }
    .summary { padding: 32px 32px 34px; border: 2px solid #e8dfcc; border-radius: 56px; background: #fff; box-shadow: 0 4px 16px rgba(15, 38, 42, 0.08); }
    .caption { margin: 0 0 24px; font-size: 24px; line-height: 32px; font-weight: 500; letter-spacing: 0.03em; color: #6b7b7a; }
    .rows { display: flex; flex-direction: column; gap: 12px; margin: 0; }
    .row { display: flex; justify-content: space-between; color: #3d4f50; }
    .row dd { margin: 0; font-weight: 500; color: #15262a; }
    .row dd.good { color: #0f4c52; }
    .row.total { margin-top: 8px; padding-top: 16px; border-top: 2px solid #e8dfcc; color: #15262a; font-weight: 600; }
    .row.total dd { font-size: 36px; line-height: 54px; font-weight: 700; }
    .actions { display: flex; gap: 24px; margin-top: 64px; }
    .btn { padding: 24px 48px; border-radius: 44px; background: none; color: #0f4c52; font-weight: 600; }
    .btn.primary { background: #e8836b; color: #fff; box-shadow: 0 8px 32px rgba(15, 38, 42, 0.1); }
  `;

  render() {
    return html`
      <header class="header">
        <a class="brand" href="#accueil">
          <span class="logo">${icon("fish", 38)}</span>
          <span class="names"><span class="name">Boréale</span><span class="tagline">SAUMON SAUVAGE</span></span>
        </a>
        <nav class="nav">${NAV.map((n) => html`<a href="#">${n}</a>`)}</nav>
        <a class="cta" href="#commande">${icon("bag", 32)}<span>Commande groupée</span></a>
      </header>
      <order-steps .steps=${["Code", "Produits", "Livraison", "Coordonnées", "Confirmation"]} .current=${2}></order-steps>
      <main class="main">
        <h1 class="heading">Mode de livraison</h1>
        <p class="intro">Choisissez comment recevoir votre commande.</p>
        <div class="columns">
          <fieldset class="stack" aria-label="Mode de livraison">
            ${OPTIONS.map((o) => {
              const on = o.id === this.selected;
              return html`<label class=${classMap({ option: true, on })} for=${o.id}>
                <input class="radio" type="radio" name="mode" id=${o.id} .checked=${on} @change=${() => (this.selected = o.id)} />
                <span class="badge">${icon(on ? "check" : "truck", 32)}</span>
                <div class="body">
                  <div class="top"><span class="title">${o.title}</span><span class="tag">${o.tag}</span></div>
                  <div class="place"><span class="pin">${icon("pin", 22)}</span><span>${o.place}</span></div>
                  <div class="when"><span>Livraison le <strong>${o.date}</strong></span><strong class=${classMap({ fee: true, free: o.free })}>${o.fee}</strong></div>
                  <div class="note">${o.note}</div>
                </div>
              </label>`;
            })}
          </fieldset>
          <div class="stack">
            <city-map></city-map>
            <section class="summary">
              <h2 class="caption">RÉCAPITULATIF</h2>
              <dl class="rows">
                <div class="row"><dt>Articles</dt><dd>5 articles</dd></div>
                <div class="row"><dt>Remise</dt><dd class="good">-20,76 €</dd></div>
                <div class="row"><dt>Livraison</dt><dd class="good">Offerte</dd></div>
                <div class="row total"><dt>Total TTC</dt><dd>83,04 €</dd></div>
              </dl>
            </section>
          </div>
        </div>
        <div class="actions">
          <button class="btn" type="button">Retour</button>
          <button class="btn primary" type="button">Continuer</button>
        </div>
      </main>
    `;
  }
}
